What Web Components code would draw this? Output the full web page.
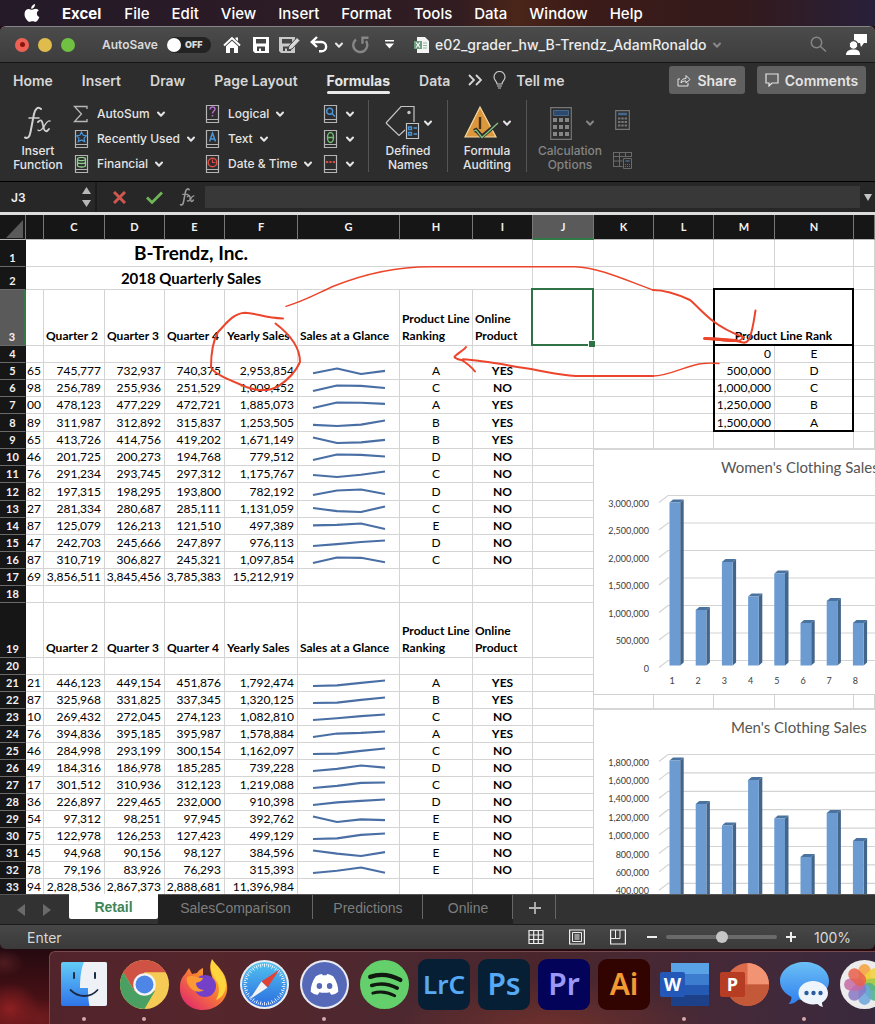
<!DOCTYPE html>
<html lang="en">
<head>
<meta charset="utf-8">
<title>e02_grader_hw_B-Trendz_AdamRonaldo</title>
<style>
  html, body { margin: 0; height: 100%; }
  body { overflow: hidden; background: #2a0d12; font-family: Inter, "Liberation Sans", sans-serif; }
</style>
</head>
<body>
<desk-top></desk-top>

<script>
const RESET = `
  * { box-sizing: border-box; }
  button, input { font: inherit; color: inherit; background: none; border: 0; padding: 0; margin: 0; }
  button { display: inline-flex; align-items: center; white-space: nowrap; }
  svg { display: block; flex: none; }
`;
function define(name, css, html) {
  const tpl = document.createElement('template');
  if (typeof html === 'string') tpl.innerHTML = `<style>${RESET}${css}</style>${html}`;
  customElements.define(name, class extends HTMLElement {
    constructor() {
      super();
      this.attachShadow({ mode: 'open' }).append(tpl.content.cloneNode(true));
    }
    connectedCallback() {
      if (typeof html === 'function') this.shadowRoot.innerHTML = `<style>${RESET}${css}</style>${html(this)}`;
    }
  });
}
const chevron = (w = 8, c = 'currentColor') =>
  `<svg width="${w}" height="8" viewBox="0 0 8 8"><path d="M1 2.500 4 5.700 7 2.500" fill="none" stroke="${c}" stroke-width="2" stroke-linecap="round" stroke-linejoin="round"/></svg>`;

/* ---------- menu bar ---------- */
define('menu-bar', `
  :host { display: flex; flex: none; align-items: center; height: 26px; padding-left: 24px; gap: 22px; color: #fff; font-size: 15px; font-weight: 500;
    background: linear-gradient(90deg, #241a28 0%, #291a27 20%, #2c1c24 35%, #311c22 52%, #4a2519 59%, #3c1b18 66%, #331a1c 85%, #28203a 100%); }
  .app { font-weight: 700; margin-right: 1px; }
`, `
  <svg width="16" height="18" viewBox="0 0 16 18" fill="#fff"><path d="M11 0c.2 1.500-.4 2.700-1.100 3.500-.8.900-1.900 1.300-2.700 1.200C7 3.300 7.600 2.200 8.400 1.400 9.100.6 10.100.1 11 0zM14.800 6.300c-1.200.8-1.900 1.800-1.900 3.200 0 1.700 1 3 2.500 3.600-.4 1.200-1 2.300-1.700 3.200-.7.900-1.300 1.500-2.300 1.500s-1.500-.6-2.900-.6-2 .6-2.900.6c-1.100 0-1.900-.8-2.700-1.900C.9 13.800.3 11 .6 8.900c.4-2.400 2.100-4 4.200-4 1.300 0 2.300.8 3.300.8.900 0 2.200-.9 3.900-.9 1.100.1 2.100.6 2.800 1.500z"/></svg>
  <button class="app">Excel</button><button>File</button><button>Edit</button><button>View</button><button>Insert</button><button>Format</button><button>Tools</button><button>Data</button><button>Window</button><button>Help</button>
`);

/* ---------- title bar ---------- */
define('title-bar', `
  :host { display: flex; flex: none; align-items: center; height: 36px; padding: 0 8px 0 15px; color: #e8e8e8;
    background: linear-gradient(#4b4b4b, #3d3d3d); border-bottom: 1px solid #161616; }
  .lights { display: flex; gap: 9px; margin-right: 27px; }
  .lights button { width: 14px; height: 14px; border-radius: 50%; justify-content: center; }
  .lights i { width: 5px; height: 5px; border-radius: 50%; background: #8a150d; }
  label { display: flex; align-items: center; gap: 8px; width: 121px; font-size: 12px; font-weight: 600; color: #d9d9d9; position: relative; }
  label span { width: 57px; white-space: nowrap; }
  .sw { width: 44px; height: 16px; border-radius: 8px; background: #232323; display: flex; align-items: center; font-size: 9px; gap: 4px; }
  .sw::before { content: ''; width: 14px; height: 14px; border-radius: 50%; background: #fff; }
  label input { position: absolute; opacity: 0; }
  .tools { display: flex; align-items: center; }
  .doc { display: flex; align-items: center; gap: 6px; font-size: 14px; font-weight: 500; color: #ececec; margin-left: 19px; }
  .end { margin-left: auto; display: flex; gap: 19px; align-items: center; }
`, `
  <div class="lights"><button aria-label="Close" style="background:#ee6255"><i></i></button><button aria-label="Minimize" style="background:#e0bc4c"></button><button aria-label="Zoom" style="background:#70c042"></button></div>
  <label><input type="checkbox"><span>AutoSave</span><b class="sw">OFF</b></label>
  <div class="tools">
    <button aria-label="Home"><svg width="18" height="18" viewBox="0 0 18 18"><path d="M1 9.500 9 2l8 7.500" fill="none" stroke="#fff" stroke-width="2"/><path d="M3 10.300 9 4.800l6 5.500V17h-4v-5H7v5H3zM12.500 1.500H15v3.800l-2.500-2.200z" fill="#fff"/></svg></button>
    <button aria-label="Save" style="margin-left:12px"><svg width="16" height="16" viewBox="0 0 16 16"><path fill="#fff" fill-rule="evenodd" d="M0 0h16v16H2l-2-2zM3 2v4.500h10V2zM4 9.500V14h2v-2.500h2V14h4V9.500z"/></svg></button>
    <button aria-label="Save as" style="margin-left:10px"><svg width="21" height="18" viewBox="0 0 21 18"><path fill="#c9c9c9" fill-rule="evenodd" d="M0 1h16v16H2l-2-2zM3 3v4.500h10V3zM4 10.500V15h2v-2.500h2V15h4v-4.500z"/><path d="m9 14 1-4 8-8.500 3 3-8 8.500z" fill="#d8d8d8" stroke="#444" stroke-width="1"/></svg></button>
    <button aria-label="Undo" style="margin-left:10px"><svg width="18" height="17" viewBox="0 0 18 17" fill="none" stroke="#fff" stroke-width="2.400"><path d="M7 1 1.800 6 7 11M2 6h9.500a4.600 4.600 0 0 1 0 9.300H9"/></svg></button>
    <button aria-label="Undo list" style="margin-left:7px">${chevron()}</button>
    <button aria-label="Redo" style="margin-left:9px"><svg width="18" height="18" viewBox="0 0 18 18" fill="none" stroke="#868686" stroke-width="2.400"><path d="M4 3.500A7 7 0 1 0 14 5"/><path d="M16.500 1.800h-6v6"/></svg></button>
    <button aria-label="Customize toolbar" style="margin-left:14px"><svg width="11" height="9" viewBox="0 0 11 9" fill="#fff"><path d="M1 0h9v1.500H1zM1 3.500h9L5.500 8.500z"/></svg></button>
  </div>
  <div class="doc">
    <svg width="15" height="16" viewBox="0 0 15 16"><path d="M3 0h8l4 4v12H3z" fill="#f4f4f4"/><path d="M0 4h8v8H0z" fill="#6f9d80"/><path d="m2 5.500 4 5M6 5.500l-4 5" stroke="#fff" stroke-width="1.200"/><path d="M9 6h4M9 8.500h4M9 11h4" stroke="#8db49a"/></svg>
    <span>e02_grader_hw_B-Trendz_AdamRonaldo</span>${chevron(8, '#888')}
  </div>
  <div class="end">
    <button aria-label="Search"><svg width="17" height="17" viewBox="0 0 17 17" fill="none" stroke="#868686" stroke-width="1.500"><circle cx="6.500" cy="6.500" r="5.200"/><path d="m10.500 10.500 5.500 5"/></svg></button>
    <button aria-label="Account"><svg width="21" height="21" viewBox="0 0 21 21" fill="#fff"><path d="M8 0h13v9h-3l-3 4-1-4h-2a5 5 0 0 0-4-3z"/><circle cx="7.500" cy="11" r="4.200" stroke="#444"/><path d="M0 21c0-4 3-5.500 7.500-5.500S14 17 14 21z"/></svg></button>
  </div>
`);

/* ---------- ribbon tabs ---------- */
define('ribbon-tabs', `
  :host { display: flex; flex: none; align-items: center; height: 34px; padding: 0 9px 0 13px; background: #2d2d2d; color: #d6d6d6; font-size: 14px; font-weight: 600; }
  nav { display: flex; gap: 29px; align-self: stretch; }
  nav button { position: relative; }
  nav .on { font-weight: 700; color: #e6e6e6; }
  nav .on::after { content: ''; position: absolute; left: 0; right: 0; bottom: 3px; height: 3px; border-radius: 2px; background: #e8e8e8; }
  .more { margin: 0 11px 0 18px; }
  .tell { gap: 10px; }
  .act { height: 28px; padding: 0 8px; border-radius: 3px; background: #606060; gap: 6px; font-weight: 600; color: #e4e4e4; justify-content: center; }
  .share { margin-left: auto; width: 76px; } .com { margin-left: 12px; width: 109px; }
`, `
  <nav><button>Home</button><button>Insert</button><button>Draw</button><button>Page Layout</button><button class="on">Formulas</button><button>Data</button></nav>
  <button class="more" aria-label="More tabs"><svg width="14" height="12" viewBox="0 0 14 12" fill="none" stroke="#d6d6d6" stroke-width="1.800"><path d="m1 1 5 5-5 5M8 1l5 5-5 5"/></svg></button>
  <button class="tell"><svg width="13" height="18" viewBox="0 0 13 18" fill="none" stroke="#c8c8c8" stroke-width="1.200"><path d="M4 13c0-3-3-3.500-3-7a5.500 5.500 0 0 1 11 0c0 3.500-3 4-3 7zM4 15h5M5 17h3"/></svg>Tell me</button>
  <button class="act share"><svg width="14" height="13" viewBox="0 0 14 13" fill="none" stroke="#e4e4e4"><path d="M3 5H1v7h10V9M4 9c0-3 2-4.500 5-4.500V1.500L13 5.500 9 9V7C7 7 5 7.500 4 9z"/></svg>Share</button>
  <button class="act com"><svg width="14" height="14" viewBox="0 0 14 14" fill="none" stroke="#e4e4e4" stroke-width="1.200"><path d="M1 1h12v9H7l-3 3v-3H1z"/></svg>Comments</button>
`);

/* ---------- ribbon ---------- */
const book = inner => `<svg width="16" height="20" viewBox="0 0 16 20"><path d="M2.500 1.500h12v17h-12zM2.500 15.500h12" fill="none" stroke="#b4b4b4" stroke-width="1.200"/>${inner}</svg>`;
const row = (icon, text) => `<button class="row">${icon}<span>${text}</span>${chevron()}</button>`;
define('ribbon-panel', `
  :host { display: grid; flex: none; grid-template-columns: 52px 140px 118px 46px 79px 79px 87px 20px; height: 85px; padding: 3px 0 0 12px; background: #2d2d2d;
    border-bottom: 1px solid #000; color: #e4e4e4; font-size: 12px; font-weight: 500; line-height: 14px; }
  .col { display: flex; flex-direction: column; padding-top: 1px; }
  .c2 { padding-left: 9px; }
  .row { height: 25px; gap: 7px; }
  .row svg:first-child { margin-right: 1px; }
  .big { display: flex; flex-direction: column; align-items: center; height: 72px; padding-top: 5px; text-align: center; }
  .big span { white-space: pre-line; text-align: center; margin-top: auto; }
  .big div { display: flex; align-items: center; height: 36px; gap: 4px; }
  .sep { border-left: 1px solid #555; }
  .off { color: #858585; }
  .off div { gap: 14px; padding-left: 4px; }
  .small { display: flex; flex-direction: column; justify-content: space-between; height: 72px; padding: 10px 0 3px; }
`, `
  <button class="big"><div><svg width="28" height="34" viewBox="0 0 28 34" fill="none" stroke="#cfcfcf" stroke-linecap="round"><path d="M17 3c-3-3-6 0-7 5L6.500 26C5.500 31 4 33 1 31.500" stroke-width="2"/><path d="M5 12h10" stroke-width="1.500"/><path d="M14 16c3-3 4-2 5 3l1 4c1 3 3 3 5 0" stroke-width="1.900"/><path d="M26 15c-4-1-6 8-10 9.500-1 .5-2 0-2-.5" stroke-width="1.300"/></svg></div><span>Insert
Function</span></button>
  <div class="col c2">
    ${row(`<svg width="16" height="18" viewBox="0 0 16 18" fill="none" stroke="#b8b8b8" stroke-width="1.300"><path d="M14 4V1.500H1.500L8.500 9l-7 7.500H14V14"/></svg>`, 'AutoSum')}
    ${row(book('<path d="m8.500 3 1.600 3.300 3.400.4-2.500 2.400.7 3.500-3.200-1.700-3.200 1.700.7-3.500-2.500-2.400 3.400-.4z" fill="none" stroke="#4a95d8" stroke-width="1.200"/>'), 'Recently Used')}
    ${row(book('<ellipse cx="8.500" cy="5" rx="4" ry="1.700" fill="none" stroke="#8fd08f" stroke-width="1.300"/><path d="M4.500 5v6.500c0 2 8 2 8 0V5M4.500 8c0 2 8 2 8 0" fill="none" stroke="#8fd08f" stroke-width="1.300"/>'), 'Financial')}
  </div>
  <div class="col">
    ${row(book('<path d="M6 5.500C6 2 11 2.300 11 5c0 2-2.500 2-2.500 4.500M8.500 11v1.500" fill="none" stroke="#b46bc8" stroke-width="1.500"/>'), 'Logical')}
    ${row(book('<path d="M5.500 12.500 8.500 4l3 8.500M6.500 10h4" fill="none" stroke="#4a95d8" stroke-width="1.500"/>'), 'Text')}
    ${row(book('<circle cx="8.500" cy="8.500" r="4.300" fill="none" stroke="#d84a44" stroke-width="1.500"/><path d="M8.500 5.500v3h3" fill="none" stroke="#d84a44" stroke-width="1.200"/>'), 'Date &amp; Time')}
  </div>
  <div class="col">
    <button class="row" aria-label="Lookup and reference">${book('<circle cx="7.700" cy="7.200" r="3" fill="none" stroke="#4a95d8" stroke-width="1.400"/><path d="m10 9.500 3 3" stroke="#4a95d8" stroke-width="1.500"/>')}${chevron()}</button>
    <button class="row" aria-label="Math and trigonometry">${book('<ellipse cx="8.500" cy="8.500" rx="3" ry="5" fill="none" stroke="#6fbf6f" stroke-width="1.400"/><path d="M5.500 8.500h6" stroke="#6fbf6f" stroke-width="1.300"/>')}${chevron()}</button>
    <button class="row" aria-label="More functions">${book('<path d="M4 8h2.200M7.400 8h2.200M10.800 8H13" stroke="#d84a44" stroke-width="2"/>')}${chevron()}</button>
  </div>
  <button class="big sep"><div><svg width="35" height="36" viewBox="0 0 35 36" fill="none"><path d="M1 18 16 1.500h13V17M20 25l-6 5.500L1 18" stroke="#c4c4c4" stroke-width="1.200"/><circle cx="24" cy="7.500" r="1.700" fill="#c4c4c4"/><path d="M21.500 18.500h12v15h-12z" stroke="#c4c4c4" stroke-width="1.200"/><path d="M23.500 22h3v2.500h-3zM23.500 27.500h3V30h-3zM28.500 23H32M28.500 29H32" stroke="#4a95d8" stroke-width="1.300"/></svg>${chevron()}</div><span>Defined
Names</span></button>
  <button class="big sep"><div><svg width="35" height="36" viewBox="0 0 35 36" fill="none"><path d="M16 2 32 32H1z" fill="#dc963c" stroke="#f3d9a4" stroke-width="1.200"/><path d="M16 12v12" stroke="#4a3414" stroke-width="2.400"/><path d="m10 26 2-1 6 6.500L34 18" stroke="#2d2d2d" stroke-width="4"/><path d="m10 26 2-1 6 7.500L34 18" stroke="#7ec47e" stroke-width="1.300"/></svg>${chevron()}</div><span>Formula
Auditing</span></button>
  <button class="big sep off" disabled><div><svg width="22" height="33" viewBox="0 0 22 33" fill="none"><path d="M.7.700h20.600v31.600H.7z" stroke="#777" stroke-width="1.200"/><path d="M3.500 3.500h15v5h-15z" fill="#2d4a6c" stroke="#47688e"/><path d="M3 13h16M3 20h16M3 27h16" stroke="#858585" stroke-width="4" stroke-dasharray="4 2"/></svg>${chevron()}</div><span>Calculation
Options</span></button>
  <div class="small">
    <button disabled aria-label="Calculate now" style="padding-left:2px"><svg width="15" height="20" viewBox="0 0 15 20" fill="none"><path d="M.7.700h13.600v18.600H.7z" stroke="#777" stroke-width="1.200"/><path d="M3 4h9" stroke="#47688e" stroke-width="2.500"/><path d="M3 8.500h9M3 12h9M3 15.500h9" stroke="#777" stroke-width="2.200" stroke-dasharray="2.400 .9"/></svg></button>
    <button disabled aria-label="Calculate sheet"><svg width="19" height="18" viewBox="0 0 19 18" fill="none" stroke="#6a6a6a"><path d="M.5 1.500h18M.5 5.500h18M.5 10h9M.5 15.500h9M.5 1v15M6.500 1v15M12.500 1v5M18.500 1v5M10.500 7.500h8v10h-8z"/><path d="M12.500 10h4" stroke="#47688e" stroke-width="1.500"/><path d="M12 13.500h5M12 15.500h5" stroke-dasharray="1 1"/></svg></button>
  </div>
`);

/* ---------- formula bar ---------- */
define('formula-bar', `
  :host { display: flex; flex: none; align-items: center; height: 33px; padding-left: 11px; background: #272727; border-bottom: 3px solid #dcdcdc; color: #f0f0f0; }
  .name { width: 66px; font-size: 12px; font-weight: 600; }
  .spin { display: flex; flex-direction: column; gap: 6px; width: 20px; height: 30px; justify-content: center; border-right: 2px solid #1c1c1c; padding-left: 5px; }
  .fx { flex: 1; min-width: 0; height: 22px; background: #383838; padding: 0 4px; font-size: 12px; }
  .b { justify-content: center; }
`, `
  <input class="name" aria-label="Name box" value="J3">
  <div class="spin"><svg width="9" height="7"><path d="M4.500 0 9 7H0z" fill="#b8b8b8"/></svg><svg width="9" height="7"><path d="M0 0h9L4.500 7z" fill="#b8b8b8"/></svg></div>
  <button class="b" style="width:44px" aria-label="Cancel"><svg width="13" height="13" viewBox="0 0 13 13"><path d="m1 1 11 11M12 1 1 12" stroke="#d0574f" stroke-width="3"/></svg></button>
  <button class="b" style="width:26px" aria-label="Accept"><svg width="17" height="13" viewBox="0 0 17 13"><path d="m1 6.500 5 5L16 1.500" fill="none" stroke="#6fb557" stroke-width="2.800"/></svg></button>
  <button class="b" style="width:38px;padding-left:3px" aria-label="Insert function"><svg width="17" height="18" viewBox="0 0 28 34" fill="none" stroke="#999" stroke-linecap="round"><path d="M17 3c-3-3-6 0-7 5L6.500 26C5.500 31 4 33 1 31.500" stroke-width="3"/><path d="M5 12h10" stroke-width="2.500"/><path d="M14 16c3-3 4-2 5 3l1 4c1 3 3 3 5 0" stroke-width="3"/><path d="M26 15c-4-1-6 8-10 9.500-1 .5-2 0-2-.5" stroke-width="2.500"/></svg></button>
  <input class="fx" aria-label="Formula">
  <button class="b" style="width:15px" aria-label="Expand formula bar"><svg width="8" height="7"><path d="M0 0h8L4 7z" fill="#c4c4c4"/></svg></button>
`);

/* ---------- sparkline: four quarters, scaled to their own range ---------- */
define('spark-line', `:host { display: block; height: 16px; overflow: hidden; }`, el => {
  const v = el.getAttribute('values').split(',').map(Number), lo = Math.min(...v), hi = Math.max(...v);
  const pts = v.map((n, i) => [15 + i * 24, 11 - 5.500 * (n - lo) / (hi - lo)].join(' ')).join(' ');
  return `<svg width="101" height="16"><polyline points="${pts}" fill="none" stroke="#4a6fa5" stroke-width="2.200" stroke-linejoin="round"/></svg>`;
});

/* ---------- 3-D column chart ---------- */
define('bar-chart', `
  :host { display: block; position: absolute; left: 593px; right: 0; background: #fff; border-top: 2px solid #d6d6d6; border-left: 1px solid #d0d0d0; overflow: hidden; }
  text { font-family: Lato, sans-serif; fill: #3c3c3c; }
`, el => {
  const j = k => JSON.parse(el.getAttribute(k));
  const tops = j('tops'), labels = j('labels'), y0 = +el.getAttribute('first'), step = +el.getAttribute('step'), base = +el.getAttribute('base');
  let s = '';
  labels.forEach((t, i) => {
    const y = y0 + i * step;
    s += `<path d="M65 ${y + 7}l9-7H400" fill="none" stroke="#d4d4d4" stroke-width="1.200"/><text x="55" y="${y + 11}" font-size="9" text-anchor="end">${t}</text>`;
  });
  tops.forEach((t, i) => {
    const x = 75.500 + i * 26.200;
    s += `<path d="M${x} ${t}l3.500-3h10.700l-3.500 3z" fill="#4a749f"/><path d="M${x + 10.700} ${t}l3.500-3V${base - 3}l-3.500 3z" fill="#44658a"/><path d="M${x} ${t}h10.700V${base}h-10.700z" fill="#6b9bd0"/>`;
    if (el.hasAttribute('categories')) s += `<text x="${x + 2.500}" y="${base + 18}" font-size="9" text-anchor="middle">${i + 1}</text>`;
  });
  return `<svg width="400" height="246"><text x="${el.getAttribute('tx')}" y="23" font-size="15" style="fill:#555">${el.getAttribute('heading')}</text>${s}</svg>`;
});

/* ---------- hand-drawn ink ---------- */
define('ink-layer', `:host { display: block; position: absolute; inset: 0; pointer-events: none; }`, `
  <svg width="875" height="680" viewBox="0 215 875 680" fill="none" stroke="#ec452b" stroke-width="2" stroke-linecap="round" stroke-linejoin="round">
    <path d="M283 318.500C265 318 256 313 245 312.700 233 313 225 325 218 332 213 341 211 352 211 367 213 374 232 381 247 387.300c12 4 22 4 31-1C291 378 297 369 300 362c0-14-8-26-24.500-38.500"/>
    <path d="M286 306.300C305 301 320 292 334 286c30-12 60-19.300 96-19.300h145C598 267 628 281 653 290" stroke-width="1.400"/>
    <path d="M653 290c12 0 24 4 37 10 8 7 15 15 23 21 10 8 22 13 31 16.500"/>
    <path d="M743 337.500c-2 3-5 4-9 3.500-9 0-20-2-30-2.500 12 0 28 1 39 4 5 1 7-4 8-9 2-6 3-14 4.500-23"/>
    <path d="M705 338.500c10 0 20 2 31 2" stroke-width="3.200"/>
    <path d="M719 363.500c-6-.5-11-.5-16 0-15 1-33 12.500-50 12.500" stroke-width="1.400"/>
    <path d="M653 376h-77c-19-1-32-5-50-7.700-21-3.300-43-8-63-9M466 347c-3 4-10 7-11.500 10 1 2 5 2.500 7 3 5 3 10 7 13.500 11.500"/>
  </svg>
`);

/* ---------- worksheet ---------- */
const A = [
  [5,'745,777','732,937','740,375','2,953,854','A','YES'],[6,'256,789','255,936','251,529','1,009,452','C','NO'],
  [7,'478,123','477,229','472,721','1,885,073','A','YES'],[8,'311,987','312,892','315,837','1,253,505','B','YES'],
  [9,'413,726','414,756','419,202','1,671,149','B','YES'],[10,'201,725','200,273','194,768','779,512','D','NO'],
  [11,'291,234','293,745','297,312','1,175,767','C','NO'],[12,'197,315','198,295','193,800','782,192','D','NO'],
  [13,'281,334','280,687','285,111','1,131,059','C','NO'],[14,'125,079','126,213','121,510','497,389','E','NO'],
  [15,'242,703','245,666','247,897','976,113','D','NO'],[16,'310,719','306,827','245,321','1,097,854','C','NO'],
  [17,'3,856,511','3,845,456','3,785,383','15,212,919'],
  [21,'446,123','449,154','451,876','1,792,474','A','YES'],[22,'325,968','331,825','337,345','1,320,125','B','YES'],
  [23,'269,432','272,045','274,123','1,082,810','C','NO'],[24,'394,836','395,185','395,987','1,578,884','A','YES'],
  [25,'284,998','293,199','300,154','1,162,097','C','NO'],[26,'184,316','186,978','185,285','739,228','D','NO'],
  [27,'301,512','310,936','312,123','1,219,088','C','NO'],[28,'226,897','229,465','232,000','910,398','D','NO'],
  [29,'97,312','98,251','97,945','392,762','E','NO'],[30,'122,978','126,253','127,423','499,129','E','NO'],
  [31,'94,968','90,156','98,127','384,596','E','NO'],[32,'79,196','83,926','76,293','315,393','E','NO'],
  [33,'2,828,536','2,867,373','2,888,681','11,396,984'],
];
const data = Object.fromEntries(A.map(r => [r[0], r.slice(1)]));
const rank = { 4: ['0','E'], 5: ['500,000','D'], 6: ['1,000,000','C'], 7: ['1,250,000','B'], 8: ['1,500,000','A'] };
const height = { 1: 27, 2: 23, 3: 56, 8: 18, 12: 18, 19: 55 };
const num = s => Number(s.replace(/,/g, ''));
function sheetRow(n) {
  let c = '';
  if (n < 3) c = `<td colspan="8" class="t${n}">${n === 1 ? 'B-Trendz, Inc.' : '2018 Quarterly Sales'}</td>`;
  else if (n === 3 || n === 19) c = '<td></td>' + ['Quarter 2','Quarter 3','Quarter 4','Yearly Sales','Sales at a Glance','Product Line<br>Ranking','Online<br>Product'].map(t => `<td class="h">${t}</td>`).join('');
  else if (data[n]) {
    const d = data[n], [q2, q3, q4, y] = d.map((v, i) => i < 4 ? num(v) : 0), q1 = y - q2 - q3 - q4;
    /* the first quarter is scrolled under the row headers: only its last two digits show */
    c = `<td class="n b">${String(q1).slice(-2)}</td>` + d.slice(0, 4).map(v => `<td class="n">${v}</td>`).join('')
      + (d[4] ? `<td><spark-line values="${[q1, q2, q3, q4]}"></spark-line></td><td class="c">${d[4]}</td><td class="c bold">${d[5]}</td>` : '<td></td><td></td><td></td>');
  } else c = '<td></td>'.repeat(8);
  c += n === 3 ? '<td class="sel"></td>' : '<td></td>';
  c += '<td></td><td></td>';
  if (n === 3) c += '<td colspan="2" class="rankhead">Product Line Rank</td>';
  else if (rank[n]) c += `<td class="n ml${n === 8 ? ' mb' : ''}">${rank[n][0]}</td><td class="c mr${n === 8 ? ' mb' : ''}">${rank[n][1]}</td>`;
  else c += '<td></td><td></td>';
  return `<tr style="height:${height[n] || 17}px"><th scope="row"${n === 3 ? ' class="on"' : ''}>${n}</th>${c}<td></td></tr>`;
}
define('work-sheet', `
  :host { display: block; position: relative; flex: 1; min-height: 0; overflow: hidden; background: #fff; color: #000; font-family: Lato, sans-serif; font-size: 12px; line-height: 16px; }
  table { table-layout: fixed; width: 100%; border-collapse: separate; border-spacing: 0; }
  td, th { padding: 0; border-right: 1px solid #d4d4d4; border-bottom: 1px solid #d4d4d4; white-space: nowrap; vertical-align: bottom; position: relative; }
  th { background: #161616; color: #f2f2f2; font-size: 11px; font-weight: 700; text-align: center; border-color: #6a6a6a; }
  thead th { height: 25px; vertical-align: middle; border-bottom-color: #bbb; border-right-color: #777; }
  tbody th { border-right-color: #161616; }
  th.on { background: #5a5a5a; }
  thead th.on { border-bottom: 2px solid #2f7a45; }
  tbody th.on { border-right: 2px solid #2f7a45; }
  .n { text-align: right; padding-right: 3px; }
  .b { padding-right: 2px; }
  .c { text-align: center; }
  .bold, .h, .rankhead { font-weight: 700; }
  .h { padding-left: 2px; padding-bottom: 1px; line-height: 17px; }
  .rankhead { text-align: center; padding-bottom: 1px; }
  .t1, .t2 { text-align: center; padding-right: 176px; font-weight: 700; vertical-align: middle; }
  .t1 { font-size: 19px; line-height: 26px; } .t2 { font-size: 15px; line-height: 22px; }
  .sel::after { content: ''; position: absolute; inset: -2px -1px -1px -2px; border: 2px solid #2f7245; }
  .sel::before { content: ''; position: absolute; right: -2px; bottom: -2px; width: 6px; height: 6px; background: #2f7245; border: 1px solid #fff; border-right: 0; border-bottom: 0; z-index: 1; }
  .rankhead::after { content: ''; position: absolute; inset: -2px -1px -1px -1px; border: 2px solid #000; }
  .ml::after, .mr::after { content: ''; position: absolute; top: -1px; bottom: -1px; pointer-events: none; }
  .ml::after { left: -1px; right: -1px; border-left: 2px solid #000; }
  .mr::after { left: 0; right: -1px; border-right: 2px solid #000; }
  .mb::after { border-bottom: 2px solid #000; }
`, () => `
  <table>
    <colgroup>${[26,18,61,60,60,73,102,73,60,61,60,60,61,79].map(w => `<col style="width:${w}px">`).join('')}<col></colgroup>
    <thead><tr><th><svg width="24" height="22"><path d="M23 4v18H6z" fill="#5a5a5a"/></svg></th><th></th>${'CDEFGHIJKLMN'.split('').map(l => `<th scope="col"${l === 'J' ? ' class="on"' : ''}>${l}</th>`).join('')}<th></th></tr></thead>
    <tbody>${Array.from({ length: 33 }, (_, i) => sheetRow(i + 1)).join('')}</tbody>
  </table>
  <bar-chart style="top:233px;height:247px;border-bottom:1px solid #d0d0d0" heading="Women's Clothing Sales" tx="127" first="45.500" step="27.500" base="215.500" categories
    labels='["3,000,000","2,500,000","2,000,000","1,500,000","1,000,000","500,000","0"]' tops="[52.5,160,112,146.500,123.500,173,151,173]"></bar-chart>
  <bar-chart style="top:493px;height:246px" heading="Men's Clothing Sales" tx="137" first="44.500" step="18.400" base="260"
    labels='["1,800,000","1,600,000","1,400,000","1,200,000","1,000,000","800,000","600,000","400,000"]' tops="[50.5,94,115.500,70,108.500,147,103,131]"></bar-chart>
  <ink-layer></ink-layer>
`);

/* ---------- sheet tabs ---------- */
define('sheet-tabs', `
  :host { display: flex; flex: none; height: 31px; background: #323232; border-top: 1px solid #555; border-bottom: 1px solid #1c1c1c; color: #7e7e7e; font-family: "Liberation Sans", sans-serif; font-size: 14px; }
  .arrows { display: flex; align-items: center; gap: 18px; width: 69px; padding-left: 17px; }
  .t { height: 30px; background: #212121; justify-content: center; padding-bottom: 4px; position: relative; }
  .t::after { content: ''; position: absolute; right: 0; top: 0; height: 24px; width: 1px; background: #666; }
  .on { height: 25px; padding-bottom: 0; background: #fff; color: #3f8557; font-weight: 700; border-radius: 0 0 2px 2px; margin-top: -1px; }
  .on::after { display: none; }
  .add { background: none; }
`, `
  <div class="arrows"><button aria-label="Previous sheets"><svg width="8" height="12"><path d="M8 0v12L0 6z" fill="#6a6a6a"/></svg></button><button aria-label="Next sheets"><svg width="8" height="12"><path d="M0 0v12l8-6z" fill="#6a6a6a"/></svg></button></div>
  <button class="t on" style="width:89px">Retail</button><button class="t" style="width:155px">SalesComparison</button><button class="t" style="width:110px">Predictions</button><button class="t" style="width:90px">Online</button>
  <button class="t add" style="width:43px" aria-label="Add sheet"><svg width="12" height="12" viewBox="0 0 12 12"><path d="M6 0v12M0 6h12" stroke="#b4b4b4" stroke-width="1.800"/></svg></button>
`);

/* ---------- status bar ---------- */
define('status-bar', `
  :host { display: flex; flex: none; align-items: center; height: 24px; padding: 0 23px 0 27px; background: linear-gradient(#474747, #3a3a3a); color: #d8d8d8; font-size: 14px; border-radius: 0 0 5px 5px; }
  .views { display: flex; gap: 25px; margin-left: auto; margin-right: 20px; }
  input { appearance: none; width: 111px; height: 14px; margin: 0 8px; }
  input::-webkit-slider-runnable-track { height: 4px; border-radius: 2px; background: #6a6a6a; }
  input::-webkit-slider-thumb { appearance: none; width: 12px; height: 12px; margin-top: -4px; border-radius: 50%; background: #c6c6c6; }
  .pct { width: 38px; margin-left: 17px; text-align: left; white-space: nowrap; }
`, `
  <span>Enter</span>
  <div class="views">
    <button aria-label="Normal view"><svg width="16" height="16" viewBox="0 0 16 16" fill="none" stroke="#eee"><path d="M1 1.500h14v13H1zM1 6h14M1 10.500h14M5.700 1.500v13M10.300 1.500v13" stroke-width="1.200"/></svg></button>
    <button aria-label="Page layout view"><svg width="16" height="16" viewBox="0 0 16 16" fill="none" stroke="#eee"><path d="M.6 1h14.800v14H.6z" stroke-width="1.200"/><path d="M3.500 3.500h9v9h-9zM5.500 6h5M5.500 8h5M5.500 10h5"/></svg></button>
    <button aria-label="Page break view"><svg width="16" height="16" viewBox="0 0 16 16" fill="none" stroke="#eee"><path d="M.6 1h14.800v14H.6z" stroke-width="1.200"/><path d="M1 9.500h9V1M5.500 1v8"/></svg></button>
  </div>
  <button aria-label="Zoom out"><svg width="12" height="12"><path d="M1 5h10v2H1z" fill="#eee"/></svg></button>
  <input type="range" min="0" max="100" value="50" aria-label="Zoom">
  <button aria-label="Zoom in"><svg width="12" height="12"><path d="M1 5h10v2H1zM5 1h2v10H5z" fill="#eee"/></svg></button>
  <span class="pct">100%</span>
`);

/* ---------- dock ---------- */
define('dock-item', `
  :host { display: flex; flex: none; flex-direction: column; align-items: center; width: 52px; height: 72px; padding-top: 6px; }
  .slot { width: 52px; height: 52px; display: grid; place-items: center; }
  :host([running])::after { content: ''; width: 4px; height: 4px; border-radius: 50%; background: #d8a8ac; margin-top: 7px; }
`, `<div class="slot"><slot></slot></div>`);

define('adobe-tile', `
  :host { display: grid; place-items: center; width: 52px; height: 51px; border-radius: 9px; font-family: "Noto Sans", sans-serif; font-size: 30px; font-weight: 600; line-height: 40px; }
  :host([long]) { font-size: 26px; }
`, `<slot></slot>`);

const ticks = Array.from({ length: 60 }, (_, i) => `<path d="M24 3.500v${i % 2 ? 2 : 3.500}" transform="rotate(${i * 6} 24 24)"/>`).join('');
const petals = ['#f4a13a','#f0d23c','#9cc84a','#4fb08a','#6aa6dc','#8a78c4','#c46aa4','#e8604c'].map((c, i) => `<rect x="18" y="4" width="12" height="20" rx="6" fill="${c}" opacity=".85" transform="rotate(${i * 45} 24 24)"/>`).join('');
define('app-dock', `
  :host { display: flex; flex: none; height: 75px; padding: 2px 0 0 49px; overflow: hidden;
    background: radial-gradient(30px 26px at 10px 60px, #8c2022, #8c202200), radial-gradient(26px 20px at 40px 70px, #701c1e, #701c1e00), radial-gradient(20px 14px at 4px 14px, #4e1c20, #4e1c2000), linear-gradient(#240a10, #5a1418); }
  .panel { flex: 1; min-width: 0; display: flex; gap: 8px; padding-left: 8px; border-radius: 6px 0 0 0; border-top: 1px solid #77484c; border-left: 1px solid #77484c;
    background: radial-gradient(160px 50px at 500px 75px, #6e302c, #6e302c00), linear-gradient(90deg, #51232a, #55262c 20%, #4b2830 45%, #4a262c 60%, #43293a 85%, #38293c); }
`, `
  <div class="panel">
  <dock-item running><svg width="46" height="44" viewBox="0 0 46 44"><defs><linearGradient id="f" x2="0" y2="1"><stop stop-color="#62cdf8"/><stop offset="1" stop-color="#2f74e8"/></linearGradient></defs><rect width="46" height="44" rx="2" fill="url(#f)"/><path d="M23 0h21a2 2 0 0 1 2 2v40a2 2 0 0 1-2 2H28.500c-1-5-1.500-10-1.500-18h-8C19 16 20 7 23 0z" fill="#eef1f5"/><path d="M13 11v5M34 11v5" stroke="#1c2a44" stroke-width="2" stroke-linecap="round"/><path d="M9.500 28c8 8 20 8 27 0" fill="none" stroke="#1c2a44" stroke-width="1.800" stroke-linecap="round"/></svg></dock-item>
  <dock-item running><svg width="49" height="49" viewBox="0 0 48 48"><circle cx="24" cy="24" r="24" fill="#f6cb55"/><path d="M44.800 12A24 24 0 0 0 3.200 12L14 30l10-18z" fill="#cf5245"/><path d="M3.200 12A24 24 0 0 0 24 48l10.400-18L24 34l-10-4z" fill="#4a9f63"/><circle cx="24" cy="24" r="11" fill="#f4f4f4"/><circle cx="24" cy="24" r="8.800" fill="#4e86e8"/></svg></dock-item>
  <dock-item><svg width="50" height="51" viewBox="0 0 50 51"><defs><linearGradient id="ff" x1="1" x2=".2" y2="1"><stop stop-color="#ffe84a"/><stop offset=".45" stop-color="#fb8a2c"/><stop offset="1" stop-color="#e22b6c"/></linearGradient></defs><path d="M6 15 10 9l3 6 5-1c2-3 4-4 6-5v8c5 0 7 2 9 4 2-3-5-10 0-21 4 7 14 12 15 26 2 14-10 25-24 25S0 41 1 27c0-5 2-9 5-12z" fill="url(#ff)"/><circle cx="26" cy="27" r="11" fill="#7440c8"/><path d="M8 18c6-3 10 1 16 1-1 4-5 4-7 5 0 4 3 7 8 7-6 4-13 0-15-4-2-3-3-6-2-9z" fill="#fb9a34"/><path d="M33 1c5 7 13 13 14 24 0 8-4 14-10 16 5-9 3-17-1-21-3-5-6-11-3-19z" fill="#ffd53e"/></svg></dock-item>
  <dock-item><svg width="49" height="49" viewBox="0 0 48 48"><defs><linearGradient id="s" x2="0" y2="1"><stop stop-color="#52c2ee"/><stop offset="1" stop-color="#2a6ce0"/></linearGradient></defs><circle cx="24" cy="24" r="24" fill="#e9eef2"/><circle cx="24" cy="24" r="22" fill="url(#s)"/><g stroke="#fff" stroke-width=".8">${ticks}</g><path d="M38.500 9.500 27 27l-6-6z" fill="#e04238"/><path d="M9.500 38.500 21 21l6 6z" fill="#f3f3f3"/></svg></dock-item>
  <dock-item running><svg width="49" height="49" viewBox="0 0 48 48"><circle cx="24" cy="24" r="24" fill="#e9ebf2"/><circle cx="24" cy="24" r="22" fill="#5669b8"/><path d="M15.500 16c2-1.500 4-2 6-2.300l.7 1.300h3.600l.7-1.300c2 .3 4 .8 6 2.300 3.500 5 5 10 5 15-2 2-4.500 3-7 3l-1.500-2.500c-3 .8-7 .8-10 0L17.500 34c-2.500 0-5-1-7-3 0-5 1.500-10 5-15z" fill="#fff"/><ellipse cx="19" cy="25.500" rx="2.700" ry="3" fill="#5669b8"/><ellipse cx="29" cy="25.500" rx="2.700" ry="3" fill="#5669b8"/></svg></dock-item>
  <dock-item><svg width="49" height="49" viewBox="0 0 48 48"><circle cx="24" cy="24" r="24" fill="#64d06c"/><g fill="none" stroke="#10180f" stroke-linecap="round"><path d="M10 16.500c9-3 20-2 29.500 3" stroke-width="4.200"/><path d="M11.500 25c8-2.500 17-1.500 25 2.500" stroke-width="3.500"/><path d="M12.500 32.500c7-2 15-1 21.500 2.500" stroke-width="2.800"/></g></svg></dock-item>
  <dock-item><adobe-tile long style="background:#071f34;color:#56a9f5">LrC</adobe-tile></dock-item>
  <dock-item><adobe-tile style="background:#071f34;color:#56a9f5">Ps</adobe-tile></dock-item>
  <dock-item><adobe-tile style="background:#03035a;color:#9a98f8">Pr</adobe-tile></dock-item>
  <dock-item><adobe-tile style="background:#310402;color:#f49a32">Ai</adobe-tile></dock-item>
  <dock-item running><svg width="49" height="43" viewBox="0 0 49 43"><path d="M11 0h38v11H11z" fill="#5aa2e6"/><path d="M11 11h38v11H11z" fill="#3d7dd0"/><path d="M11 22h38v10H11z" fill="#2459b4"/><path d="M11 32h38v11H11z" fill="#1d4188"/><rect y="9" width="25" height="25" rx="2" fill="#2458b8"/><text x="12.500" y="28" text-anchor="middle" font-family="Open Sans, sans-serif" font-size="18" font-weight="700" fill="#fff">W</text></svg></dock-item>
  <dock-item><svg width="49" height="43" viewBox="0 0 49 43"><circle cx="27.500" cy="21.500" r="21.500" fill="#dc6b4c"/><path d="M27.500 0A21.500 21.500 0 0 1 49 21.500H27.500z" fill="#f29474"/><path d="M6 21.500a21.500 21.500 0 0 0 43 0z" fill="#c4593a"/><rect y="9" width="25" height="25" rx="2" fill="#b63c24"/><text x="12.500" y="28" text-anchor="middle" font-family="Open Sans, sans-serif" font-size="18" font-weight="700" fill="#fff">P</text></svg></dock-item>
  <dock-item running><svg width="49" height="46" viewBox="0 0 49 46"><defs><linearGradient id="m" x2="0" y2="1"><stop stop-color="#6cc0f6"/><stop offset="1" stop-color="#2f80ee"/></linearGradient></defs><path d="M24.500 1C38 1 49 9 49 20S38 39 24.500 39c-2 0-4-.2-6-.6-3 3-6 4.600-10 4.600 2-2 3-4.500 3-7C4.500 32.500 0 27 0 20 0 9 11 1 24.500 1z" fill="url(#m)"/><path d="M33 20c8 0 15 5 15 12 0 4-2.500 7.500-6 9.500 0 2 .5 3 1 4.500-2.500-.5-4-1.500-5.500-3-10 2-19-3-19-11 0-7 6.500-12 14.500-12z" fill="#eef4fb"/><circle cx="26.500" cy="32" r="2.200" fill="#2a5da0"/><circle cx="33.500" cy="32" r="2.200" fill="#2a5da0"/><circle cx="40.500" cy="32" r="2.200" fill="#2a5da0"/></svg></dock-item>
  <dock-item><svg width="49" height="49" viewBox="0 0 48 48"><circle cx="24" cy="24" r="24" fill="#ececec"/>${petals}</svg></dock-item>
  </div>
`);

/* ---------- shell ---------- */
define('excel-window', `
  :host { display: flex; flex-direction: column; flex: 1; min-height: 0; border-top: 1px solid #858585; border-radius: 6px; overflow: hidden; background: #2d2d2d; }
`, `<title-bar></title-bar><ribbon-tabs></ribbon-tabs><ribbon-panel></ribbon-panel><formula-bar></formula-bar><work-sheet></work-sheet><sheet-tabs></sheet-tabs><status-bar></status-bar>`);
define('desk-top', `:host { display: flex; flex-direction: column; height: 100vh; }`, `<menu-bar></menu-bar><excel-window></excel-window><app-dock></app-dock>`);
</script>
</body>
</html>
